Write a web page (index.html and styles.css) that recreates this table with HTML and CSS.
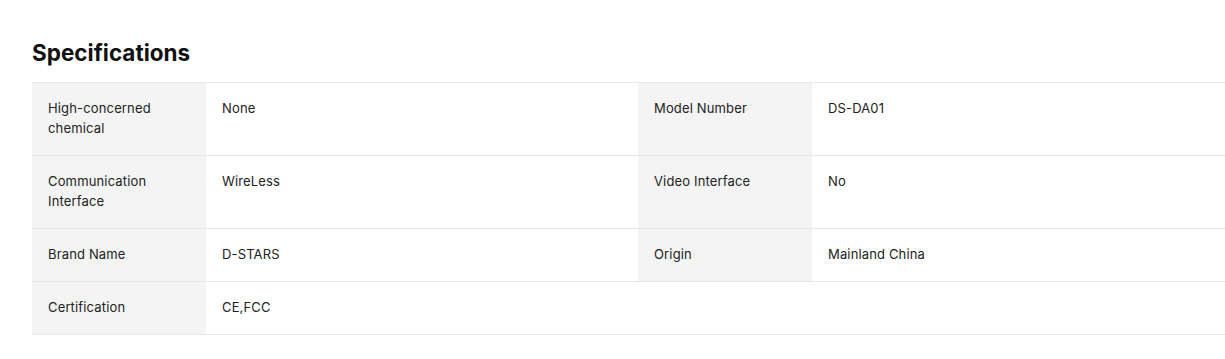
FILE: index.html
```html
<!DOCTYPE html>
<html>
<head>
<meta charset="utf-8">
<link rel="stylesheet" href="styles.css">
</head>
<body>
<section class="specs">
  <h2 class="specs-title">Specifications</h2>
  <div class="specs-grid">
    <div class="cell label">High-concerned<br>chemical</div>
    <div class="cell value">None</div>
    <div class="cell label">Model Number</div>
    <div class="cell value">DS-DA01</div>

    <div class="cell label">Communication<br>Interface</div>
    <div class="cell value">WireLess</div>
    <div class="cell label">Video Interface</div>
    <div class="cell value">No</div>

    <div class="cell label">Brand Name</div>
    <div class="cell value">D-STARS</div>
    <div class="cell label">Origin</div>
    <div class="cell value">Mainland China</div>

    <div class="cell label">Certification</div>
    <div class="cell value">CE,FCC</div>
    <div class="cell empty"></div>
    <div class="cell empty"></div>
  </div>
</section>
</body>
</html>
```

FILE: styles.css
```css
html, body {
  margin: 0;
  padding: 0;
  background: #ffffff;
  overflow: hidden;
}
body {
  font-family: Inter, "Noto Sans", sans-serif;
  color: #222222;
}
.specs {
  padding: 36px 0 0 32px;
  width: 1212px;
}
.specs-title {
  margin: 0 0 12px 0;
  font-size: 22.5px;
  line-height: 34px;
  font-weight: 700;
  color: #111111;
}
.specs-grid {
  display: grid;
  grid-template-columns: 174px 432px 174px 432px;
  border-top: 1px solid #e8e8e8;
}
.cell {
  padding: 15px 16px 17px;
  font-size: 13px;
  letter-spacing: 0.15px;
  line-height: 20px;
  border-bottom: 1px solid #e8e8e8;
}
.label {
  background: #f4f4f4;
}
.value {
  background: #ffffff;
}
.empty {
  background: #ffffff;
}
```
